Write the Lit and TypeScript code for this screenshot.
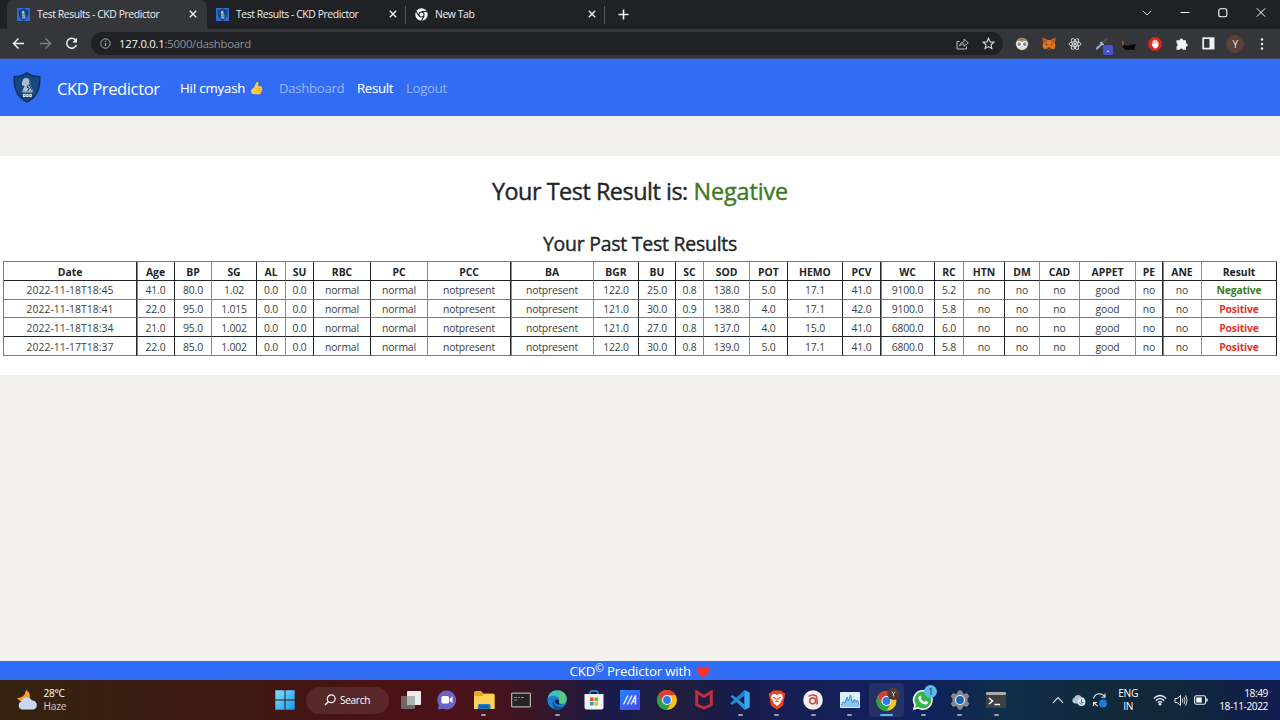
import { LitElement, html, css, svg } from "lit";
import { customElement } from "lit/decorators.js";
import { classMap } from "lit/directives/class-map.js";

const HEAD = "Date,Age,BP,SG,AL,SU,RBC,PC,PCC,BA,BGR,BU,SC,SOD,POT,HEMO,PCV,WC,RC,HTN,DM,CAD,APPET,PE,ANE,Result".split(",");
const ROWS = [
  "2022-11-18T18:45,41.0,80.0,1.02,0.0,0.0,normal,normal,notpresent,notpresent,122.0,25.0,0.8,138.0,5.0,17.1,41.0,9100.0,5.2,no,no,no,good,no,no,Negative",
  "2022-11-18T18:41,22.0,95.0,1.015,0.0,0.0,normal,normal,notpresent,notpresent,121.0,30.0,0.9,138.0,4.0,17.1,42.0,9100.0,5.8,no,no,no,good,no,no,Positive",
  "2022-11-18T18:34,21.0,95.0,1.002,0.0,0.0,normal,normal,notpresent,notpresent,121.0,27.0,0.8,137.0,4.0,15.0,41.0,6800.0,6.0,no,no,no,good,no,no,Positive",
  "2022-11-17T18:37,22.0,85.0,1.002,0.0,0.0,normal,normal,notpresent,notpresent,122.0,30.0,0.8,139.0,5.0,17.1,41.0,6800.0,5.8,no,no,no,good,no,no,Positive",
].map((r) => r.split(","));
const THICK = new Set([0, 8, 16, 23]);
const DARK = new Set([0, 1, 3, 5, 6, 8, 10, 11, 14, 15, 16, 17, 19, 23, 25]);

const shield = svg`
  <path d="M14 .8C18 3.8 22 4.6 26.800 4.600C27.400 15 24.800 25 14 30C3.200 25 .6 15 1.200 4.600C6 4.600 10 3.800 14 .8Z" fill="#17477f" stroke="#0c2b57" stroke-width="1.300"/>
  <path d="M9.500 9C10 5.300 15.500 4.800 16.500 8.500L16.300 11.500L17.500 13.500L20.500 19.300H9.200L11.500 14L9.300 13.500Q8 11 9.500 9Z" fill="#a9bfd4"/>
  <path d="M15.800 12.500L13.800 15L16.300 16.200L14.800 19M16.300 13L19.300 18.500" stroke="#0d3263" stroke-width="1" fill="none"/>
  <path d="M9.500 20H19.500" stroke="#e3edf7" stroke-width=".8"/>
  <path d="M10 22H18.800V25H10Z" fill="#e6eef7"/><path d="M12.900 22V25M15.900 22V25M10.800 23.500H12M13.800 23.500H15M16.800 23.500H18" stroke="#17477f" stroke-width=".6"/>`;
const favicon = html`<svg class="fav" width="13" height="13" viewBox="0 0 28 28"><rect width="28" height="28" fill="#3468d8"/><g transform="translate(3.500 1) scale(.76 .86)">${shield}</g></svg>`;
const closeX = html`<svg width="8" height="8" viewBox="0 0 8 8"><path d="M.8.8L7.200 7.200M7.200.8L.8 7.200" stroke="#f1f1f1" stroke-width="1.400"/></svg>`;
const chromeMono = html`<svg class="fav" width="13" height="13" viewBox="0 0 24 24"><circle cx="12" cy="12" r="11.500" fill="#f1f3f4"/><circle cx="12" cy="12" r="5.600" fill="#202124"/><circle cx="12" cy="12" r="3.700" fill="#f1f3f4"/><path d="M12 6.400H22.500M7.200 14.900L2 6M16.800 14.900L11.600 24" stroke="#202124" stroke-width="1.900"/></svg>`;
const chromeShape = svg`
  <circle cx="10" cy="10" r="10" fill="#fbc116"/>
  <path d="M1.340 5A10 10 0 0 0 10 20L14.330 12.500L10 10L5.670 12.500Z" fill="#2ba24c"/>
  <path d="M1.340 5L5.670 12.500L10 10V5H18.660A10 10 0 0 0 1.340 5Z" fill="#e33b2e"/>
  <circle cx="10" cy="10" r="5" fill="#fff"/><circle cx="10" cy="10" r="3.900" fill="#2f79e8"/>`;

const I = (w: number, h: number, body: unknown) => html`<svg width=${w} height=${h} viewBox="0 0 ${w} ${h}" fill="none">${body}</svg>`;

const EXT = [
  I(14, 14, svg`<circle cx="7" cy="7" r="6.200" fill="#b5a58a"/><path d="M2 10Q7 16 12 10Z" fill="#e6dccb"/><path d="M2.500 3.500Q7 -1 11.500 3.500Z" fill="#8b7958"/><circle cx="4.200" cy="7.200" r="2.400" fill="#7d8d96" stroke="#fff" stroke-width="1.100"/><circle cx="9.800" cy="7.200" r="2.400" fill="#7d8d96" stroke="#fff" stroke-width="1.100"/>`),
  I(14, 13, svg`<path d="M.5.5L5.500 3H8.500L13.500.5L12.800 6L13.500 9L12 12.300L9 11.500L8 12.600H6L5 11.500L2 12.300L.5 9L1.200 6Z" fill="#e2761b"/><path d="M.5.5L5.500 4L4 6L1 6ZM13.500.5L8.500 4L10 6L13 6Z" fill="#b8582a"/><path d="M3 7.500L5.500 7L5 8.600ZM11 7.500L8.500 7L9 8.600Z" fill="#233447"/><path d="M5.500 10.500H8.500L8 12H6Z" fill="#3a2a28"/>`),
  I(14, 14, svg`<g stroke="#e4e6e8" stroke-width=".9"><ellipse cx="7" cy="7" rx="6" ry="2.300"/><ellipse cx="7" cy="7" rx="6" ry="2.300" transform="rotate(60 7 7)"/><ellipse cx="7" cy="7" rx="6" ry="2.300" transform="rotate(120 7 7)"/></g><circle cx="7" cy="7" r="1.200" fill="#e4e6e8"/>`),
  html`<span class="picker">${I(14, 14, svg`<path d="M2 11.500L7 6.500" stroke="#8fb0e6" stroke-width="2.200" stroke-linecap="round"/><path d="M7.500 6L11.500 2" stroke="#4a4d55" stroke-width="2.600" stroke-linecap="round"/><path d="M5.500 5L8.500 8" stroke="#d5dbe5" stroke-width="1.200"/>`)}<b class="dot">.</b></span>`,
  I(16, 14, svg`<path d="M1.500 4.500L3.500 8L6.500 9L12 7.500L15.200 7.500L14 9.500L13.500 12.800H4L1.500 9.500Z" fill="#050505"/><path d="M1.200 3.500L2.600 5V9L1.500 8.500Z" fill="#b47a3b"/>`),
  I(14, 14, svg`<path d="M4.200.3H9.800L13.700 4.200V9.800L9.800 13.700H4.200L.3 9.800V4.200Z" fill="#d8281d"/><path d="M5.200 4V8M6.700 3V8M8.200 3.300V8M9.700 4.700V8.500" stroke="#fff" stroke-width="1.100" stroke-linecap="round"/><path d="M4.600 6.600H10.300V8.800Q9.500 11.500 7.300 11.500Q5.500 11.500 3.700 7.600Z" fill="#fff"/>`),
  I(14, 14, svg`<path d="M1.500 3.300H4.700A1.700 1.700 0 1 1 8.100 3.300H11V6.200A1.700 1.700 0 1 1 11 9.600V12.700H8A1.700 1.700 0 0 0 4.800 12.700H1.500V9.500A1.700 1.700 0 0 0 1.500 6.300Z" fill="#f1f3f4"/>`),
  I(13, 13, svg`<rect x="1.200" y="1.200" width="10.400" height="10.400" stroke="#f1f3f4" stroke-width="1.700"/><rect x="7.500" y="1" width="4.500" height="11" fill="#f1f3f4"/>`),
];

const TASKS: { icon: unknown; state?: string }[] = [
  { icon: I(22, 20, svg`<rect x="7" y="1" width="14" height="14" rx="1" fill="#ececec"/><rect x="1" y="6" width="14" height="13" rx="1" fill="#777" fill-opacity=".85"/><rect x="7" y="6" width="8" height="9" fill="#b2b2b2"/>`) },
  { icon: I(20, 20, svg`<path d="M10 .5A9.500 9.500 0 1 1 6 18.800L.8 19.500L1.800 15A9.500 9.500 0 0 1 10 .5Z" fill="#6d62c5"/><rect x="4.500" y="6" width="7.500" height="7.500" rx="1.500" fill="#fff"/><path d="M12.600 8.800L15.500 6.600V13L12.600 11Z" fill="#fff"/>`) },
  { icon: I(22, 20, svg`<path d="M1 2.500Q1 1 2.500 1H8L10.500 3.500H20Q21.500 3.500 21.500 5V18.500H1Z" fill="#e7a52b"/><path d="M1 6H9L11 4.300H21.500V19H1Z" fill="#ffd257"/><path d="M5 19V15.500Q5 14 6.500 14H16Q17.500 14 17.500 15.500V19Z" fill="#1778c6"/><path d="M7.500 16.800H15" stroke="#0a4f91" stroke-width="1.200"/>`), state: "run" },
  { icon: I(20, 16, svg`<rect x=".6" y="1.100" width="18.800" height="13.800" rx="1" fill="#242424" stroke="#aaa" stroke-width="1.300"/><path d="M3 5.500H6M7 5.500H9M10 5.500H13M3 8H6" stroke="#888" stroke-width="1"/>`) },
  { icon: I(20, 20, svg`<circle cx="10" cy="10" r="9.700" fill="#1b7fd0"/><path d="M.5 8.500C1.500 3.500 5.500 .3 10 .3C16 .3 19.700 4.500 19.700 8.800C19.700 12.300 17 14 14.200 14C11.800 14 11.300 12.900 12.200 11.500C13 8 9.500 5.800 6.500 5.800C3.800 5.800 1.800 6.800 .5 8.500Z" fill="#3fc1b0"/><path d="M12 .5C17 1.500 19.700 5 19.700 8.800C19.700 12.300 17 14 14.200 14C11.800 14 11.300 12.900 12.200 11.500C13.500 8 12 3 12 .5Z" fill="#62cc6a" fill-opacity=".75"/><path d="M7.300 10.500C6 15 10.500 18.400 17.500 16.200C15.500 19 12 20 9 19.600C5.500 18.500 4.500 12 7.300 10.500Z" fill="#0f4f9e"/><path d="M8.200 10A3 3 0 0 1 12.200 11.500C11.300 12.900 11.800 14 14.200 14C11 15.500 7.500 13.500 8.200 10Z" fill="#0b2240"/>`), state: "run" },
  { icon: I(20, 20, svg`<path d="M6 5V2.500Q6 1 7.500 1H12.500Q14 1 14 2.500V5" stroke="#2fa4e0" stroke-width="1.300"/><path d="M.5 4H19.500V17.500Q19.500 19.500 17.500 19.500H2.500Q.5 19.500.5 17.500Z" fill="#f3f4f6"/><path d="M6 7.500H9.600V11.100H6Z" fill="#e9542c"/><path d="M10.400 7.500H14V11.100H10.400Z" fill="#7fb52e"/><path d="M6 11.900H9.600V15.500H6Z" fill="#2a9ddd"/><path d="M10.400 11.900H14V15.500H10.400Z" fill="#f5b62a"/>`) },
  { icon: I(20, 20, svg`<defs><linearGradient id="m" x2="1" y2="1"><stop stop-color="#2087ff"/><stop offset="1" stop-color="#4d43ea"/></linearGradient></defs><rect width="20" height="20" fill="url(#m)"/><path d="M3.500 14.500L8 5.500M7.500 14.500L12 5.500M11 14.500L15.500 5.500V14.500M12.500 11.500H15.500" stroke="#dcebff" stroke-width="1.500"/>`) },
  { icon: I(20, 20, chromeShape) },
  { icon: I(20, 20, svg`<path d="M2.700 2L10 6.500L17.300 2V14.800L10 18L2.700 14.800Z" stroke="#bf2d3e" stroke-width="3"/>`) },
  { icon: I(20, 20, svg`<path d="M14.500.3L19.500 2.500V17.500L14.500 19.700V5.500L2.500 15L.5 13.800V12.700Z" fill="#1a86d0"/><path d="M.5 6.200L2.500 5L14.500 14.500V19.700Z" fill="#2497e0"/><path d="M14.500.3L19.500 2.500V17.500L14.500 19.700Z" fill="#38a9ef"/>`), state: "run" },
  { icon: I(18, 20, svg`<path d="M5 .5H13L15 2.500L17.300 3.500L16.800 6L15 15.500L9 19.800L3 15.500L1.200 6L.7 3.500L3 2.500Z" fill="#f0451d"/><path d="M4 4.500L6.500 4L9 5L11.500 4L14 4.500L15 8L13 11L12 13.500L9 16L6 13.500L5 11L3 8Z" fill="#fff"/><path d="M5 7.300L7.500 8L7 9.500M13 7.300L10.500 8L11 9.500M7 12L9 11L11 12M9 8V11.500" stroke="#f0451d" stroke-width="1"/>`), state: "run" },
  { icon: I(20, 20, svg`<circle cx="10" cy="10" r="9.800" fill="#f0eeee"/><circle cx="9.700" cy="10.700" r="3" stroke="#d1433e" stroke-width="1.500"/><path d="M5.500 6.300Q9.500 3.800 13 5.800Q14.500 7.500 14 14.500" stroke="#d1433e" stroke-width="1.500"/>`), state: "run" },
  { icon: I(20, 16, svg`<rect width="20" height="16" rx=".8" fill="#d9edfa"/><path d="M1 13L3 10L5 11L7 5L8.500 9L10.500 3L12.500 11L14.500 7L16 10L17.500 8L19 13V15H1Z" fill="#8cc6ee"/><path d="M1 13L3 10L5 11L7 5L8.500 9L10.500 3L12.500 11L14.500 7L16 10L17.500 8L19 13" stroke="#3186c4" stroke-width=".9"/>`), state: "run" },
  { icon: I(26, 24, svg`<g transform="translate(2.500 3)">${chromeShape}</g><circle cx="19.500" cy="5.800" r="6.200" fill="#503b36"/><path d="M17.800 3.500L19.500 6L21.200 3.500M19.500 6V8.500" stroke="#d5c5bd" stroke-width="1"/>`), state: "active" },
  { icon: html`<span class="wa">${I(22, 22, svg`<path d="M11 1A10 10 0 1 1 6 19.800L.8 21L2.200 16A10 10 0 0 1 11 1Z" fill="#fff"/><path d="M11 2.600A8.400 8.400 0 1 1 6.300 18L3 18.900L4 15.800A8.400 8.400 0 0 1 11 2.600Z" fill="#35b54a"/><path d="M7 7.500Q8.500 5.500 9.300 8L9 9.800Q10.300 12 12.500 13L13.800 11.800L16 13Q16 15.500 13.500 15.500Q7.500 14.500 6.500 9.500Z" fill="#fff"/>`)}<b class="count">1</b></span>`, state: "run" },
  { icon: I(20, 20, svg`<path d="M8 .5H12L12.600 3L14.500 4L17 3L19.300 6.500L17.500 8.500V11.500L19.300 13.500L17 17L14.500 16L12.600 17L12 19.500H8L7.400 17L5.500 16L3 17L.7 13.500L2.500 11.500V8.500L.7 6.500L3 3L5.500 4L7.400 3Z" fill="#85898e"/><circle cx="10" cy="10" r="5" fill="#e9eef3"/><circle cx="10" cy="10" r="3.900" fill="#1463b0"/>`), state: "run" },
  { icon: I(20, 16, svg`<rect width="20" height="16" rx="1" fill="#3e3f41"/><rect width="20" height="3" rx="1" fill="#a9abad"/><path d="M3 6L6.500 9L3 12M8.500 12.500H14" stroke="#fff" stroke-width="1.500"/>`), state: "run" },
];

@customElement("app-root")
export class AppRoot extends LitElement {
  static styles = css`
    :host { display: flex; flex-direction: column; width: 1280px; height: 720px; overflow: hidden; background: #f3f1ed; color: #212529; font-family: "Open Sans", "Noto Sans", sans-serif; }
    * { box-sizing: border-box; }
    svg { display: block; flex: none; }
    .tabs { display: flex; height: 29px; background: #202124; align-items: stretch; padding-left: 7px; color: #eceef0; font-size: 10.400px; letter-spacing: -.42px; white-space: nowrap; }
    .tab { display: flex; align-items: center; width: 199px; padding: 0 9px 1px 10px; border-right: 1px solid transparent; }
    .tab .fav { margin-right: 7px; }
    .tab .title { flex: 1; }
    .tab.on { width: 200px; background: #35363a; border-radius: 7px 7px 0 0; }
    .tab.sep { padding-left: 9px; padding-right: 8px; border-image: linear-gradient(transparent 7px, #55585c 7px, #55585c 23px, transparent 23px) 1; }
    .plus { margin: 9px 0 0 13px; }
    .win { display: flex; align-items: center; margin-left: auto; height: 26px; padding-right: 14px; gap: 28px; }
    .bar { display: flex; height: 30px; background: #35363a; align-items: center; padding-left: 12px; border-bottom: 1px solid #3d4660; }
    .navs { display: flex; gap: 13.700px; width: 79px; }
    .omni { display: flex; align-items: center; width: 912px; height: 23px; border-radius: 12px; background: #202124; padding: 0 8px 0 9px; font-size: 11.300px; letter-spacing: -.24px; color: #8f9398; }
    .omni .url { margin-left: 8px; flex: 1; }
    .omni .host { color: #f3f4f5; }
    .omni .acts { display: flex; gap: 13px; }
    .exts { display: flex; margin-left: 5.500px; }
    .ext { display: flex; width: 26.700px; height: 26px; align-items: center; justify-content: center; }
    .picker { position: relative; }
    .dot { position: absolute; left: 8px; top: 8px; width: 10px; height: 10px; background: #4454c6; color: #fff; border-radius: 1px; font-size: 8px; line-height: 7px; text-align: center; }
    .avatar { width: 18px; height: 18px; border-radius: 50%; background: #5d4037; color: #f0e8e4; font-size: 10px; line-height: 18px; text-align: center; }
    nav { display: flex; height: 57px; background: #316cf4; align-items: center; padding: 0 0 0 13px; color: #fff; white-space: nowrap; }
    .brand { font-size: 16.600px; letter-spacing: -.42px; margin: 2px 0 0 16px; width: 123px; }
    .links { display: flex; font-size: 13.200px; letter-spacing: -.3px; padding-top: 1px; }
    .hi { display: flex; align-items: center; width: 99px; gap: 5px; letter-spacing: -.16px; }
    .dash { width: 78px; }
    .res { width: 49px; letter-spacing: -.3px; }
    .hi, .res { -webkit-text-stroke: .1px currentColor; }
    .dim { color: #98b5f9; }
    .panel { margin-top: 40px; height: 219px; background: #fff; padding: 20px 3px 0; }
    h1, h2 { font-weight: 400; -webkit-text-stroke: .4px currentColor; }
    h1 { margin: 0; height: 54px; font-size: 23.400px; line-height: 30px; letter-spacing: -.47px; text-align: center; }
    h1 .neg { letter-spacing: -.1px; }
    h2 { margin: 0; height: 31px; font-size: 19.400px; line-height: 27px; letter-spacing: -.21px; text-align: center; }
    .neg { color: #3d7a24; }
    .pos { color: #e3342a; }
    .grid { display: grid; width: 1274px; border-left: 1px solid #777b7e; border-top: 1px solid #777b7e; grid-template-rows: 19px 19px 18px 19px 19px;
      grid-template-columns: 133px 38px 37px 45px 29px 28px 57px 57px 83px 83px 45px 37px 28px 46px 38px 55px 38px 54px 29px 41px 35px 40px 56px 27px 39px 75px; }
    .cell { display: flex; align-items: center; justify-content: center; border-right: 1px solid #8a8d90; border-bottom: 1px solid #777b7e; font-size: 10.400px; letter-spacing: -.17px; line-height: 14px; white-space: nowrap; color: #3a3e42; }
    .cell.d { border-right-color: #212529; }
    .cell.t { box-shadow: 1px 0 0 #8a8d90; }
    .cell.u { border-bottom-color: #212529; }
    .cell.b { font-weight: 700; color: #212529; }
    .cell.date { letter-spacing: .03px; }
    .cell.low { padding-top: 1px; }
    .cell.head { padding-top: 1px; letter-spacing: -.02px; }
    .cell.neg { color: #3d7a24; }
    .cell.pos { color: #e3342a; }
    footer { display: flex; justify-content: center; align-items: center; height: 19px; padding-top: 2px; margin-top: auto; background: #316cf4; color: #fff; font-size: 13.200px; letter-spacing: -.16px; line-height: 17px; white-space: pre; }
    sup { font-size: 10.500px; line-height: 0; vertical-align: 4px; }
    .heart { margin-left: 5.500px; }
    .task { display: flex; height: 40px; align-items: center; color: #fff; font-size: 10.200px; letter-spacing: -.35px; white-space: nowrap; background: linear-gradient(90deg, #34230f 0, #3a1e12 120px, #401612 270px, #4b1214 380px, #4a121a 470px, #3a1423 530px, #1a1b4b 610px, #201d3d 680px, #171c4c 740px, #14205a 850px, #10215a 930px, #102d49 1000px, #10293a 1120px, #10263c 1190px, #111c50 1280px); }
    .weather { display: flex; align-items: center; width: 274.500px; padding-left: 16px; gap: 5.500px; line-height: 13px; }
    .haze { color: #d2c7c2; letter-spacing: -.2px; }
    .search { display: flex; align-items: center; justify-content: center; gap: 4px; width: 83px; height: 27px; margin: 0 4px 0 11px; border-radius: 14px; background: rgba(255,255,255,.09); }
    .apps { display: flex; }
    .app { position: relative; display: flex; width: 36.600px; height: 40px; align-items: center; justify-content: center; }
    .app.run::after, .app.active::after { content: ""; position: absolute; left: 15.800px; bottom: 4px; width: 5px; height: 2px; border-radius: 1px; background: #9a9ca8; }
    .app.active::before { content: ""; position: absolute; inset: 3px 1px; border-radius: 3px; background: rgba(255,255,255,.08); }
    .app.active::after { left: 12px; width: 13px; background: #55b8ee; }
    .app svg { position: relative; }
    .wa { position: relative; }
    .count { position: absolute; right: -3px; top: -4px; width: 13px; height: 13px; border-radius: 50%; background: #55b9f0; color: #123; font-size: 9px; font-weight: 400; line-height: 13px; text-align: center; }
    .tray { display: flex; align-items: center; margin-left: auto; padding-right: 12px; line-height: 13px; text-align: center; }
    .sys { display: flex; gap: 6.500px; align-items: center; }
    .lang { margin: 0 15px 0 11px; }
    .clock { width: 60px; text-align: right; letter-spacing: -.44px; }
  `;

  cell(v: string, c: number, r: number) {
    const cls = {
      cell: true, d: DARK.has(c), t: THICK.has(c), u: r === 0 || r === 3, b: r === 0 || c === 25,
      head: r === 0, date: c === 0 && r > 0, low: r >= 3, neg: v === "Negative", pos: v === "Positive",
    };
    return html`<div class=${classMap(cls)}>${v}</div>`;
  }

  render() {
    return html`
      <div class="tabs">
        <div class="tab on">${favicon}<span class="title">Test Results - CKD Predictor</span>${closeX}</div>
        <div class="tab sep">${favicon}<span class="title">Test Results - CKD Predictor</span>${closeX}</div>
        <div class="tab sep">${chromeMono}<span class="title">New Tab</span>${closeX}</div>
        <svg class="plus" width="11" height="11" viewBox="0 0 11 11"><path d="M5.500.5V10.500M.5 5.500H10.500" stroke="#f1f1f1" stroke-width="1.600"/></svg>
        <div class="win">
          ${I(10, 6, svg`<path d="M.8.800L5 5L9.200.800" stroke="#d5d6d8" stroke-width="1"/>`)}
          ${I(10, 10, svg`<path d="M.5 4.500H9.500" stroke="#fff" stroke-width="1"/>`)}
          ${I(10, 10, svg`<rect x=".8" y=".8" width="8" height="8" rx="1.800" stroke="#fff" stroke-width="1.100"/>`)}
          ${I(10, 10, svg`<path d="M.8.300L9.200 8.700M9.200.300L.8 8.700" stroke="#fff" stroke-width="1"/>`)}
        </div>
      </div>
      <div class="bar">
        <div class="navs">
          ${I(13, 13, svg`<path d="M12 6.500H1.500M6.500 1.500L1.500 6.500L6.500 11.500" stroke="#f1f3f4" stroke-width="1.400"/>`)}
          ${I(13, 13, svg`<path d="M1 6.500H11.500M6.500 1.500L11.500 6.500L6.500 11.500" stroke="#7d8084" stroke-width="1.400"/>`)}
          ${I(13, 13, svg`<path d="M10.800 3.300A5 5 0 1 0 11.400 8" stroke="#f1f3f4" stroke-width="1.500"/><path d="M12 .8V5.500H7.300Z" fill="#f1f3f4"/>`)}
        </div>
        <div class="omni">
          ${I(11, 11, svg`<circle cx="5.500" cy="5.500" r="4.700" stroke="#a5a8ac"/><path d="M5.500 5V8M5.500 2.800V4" stroke="#a5a8ac" stroke-width="1.200"/>`)}
          <span class="url"><span class="host">127.0.0.1</span>:5000/dashboard</span>
          <span class="acts">
            ${I(13, 13, svg`<path d="M3.500 4.500H1V12H10.500V9.500" stroke="#b9bcc0"/><path d="M3.500 9Q4 5 8 4.700V2L12.300 5.800L8 9.300V6.800Q5.500 6.800 3.500 9Z" stroke="#b9bcc0" stroke-width=".9"/>`)}
            ${I(13, 13, svg`<path d="M6.500 1.200L8.100 4.900L12 5.200L9 7.800L9.900 11.700L6.500 9.600L3.100 11.700L4 7.800L1 5.200L4.900 4.900Z" stroke="#d7d9dc" stroke-width="1.100"/>`)}
          </span>
        </div>
        <div class="exts">
          ${EXT.map((e) => html`<div class="ext">${e}</div>`)}
          <div class="ext"><div class="avatar">Y</div></div>
          <div class="ext">${I(4, 14, svg`<g fill="#f1f3f4"><circle cx="2" cy="2.500" r="1.200"/><circle cx="2" cy="7" r="1.200"/><circle cx="2" cy="11.500" r="1.200"/></g>`)}</div>
        </div>
      </div>
      <nav>
        <svg width="28" height="31" viewBox="0 0 28 31">${shield}</svg>
        <span class="brand">CKD Predictor</span>
        <div class="links">
          <span class="hi"><span>Hi! cmyash</span>
            ${I(13, 14, svg`<path d="M4 6.500L6.300 1.500Q7 .3 8 1.200Q8.800 2 8 5.300H10.800Q12.300 5.500 12 7Q12.700 8 12 9Q12.300 10.300 11.300 11Q11.300 13 9.500 13.200H4.500Q1 13.200 1 10Q1 8 4 6.500Z" fill="#ffc83d"/><path d="M8.200 7.600H11.800M8.500 9.500H11.500M8.500 11.300H11" stroke="#e19b24" stroke-width=".7"/>`)}
          </span>
          <span class="dash dim">Dashboard</span><span class="res">Result</span><span class="dim">Logout</span>
        </div>
      </nav>
      <section class="panel">
        <h1>Your Test Result is: <span class="neg">Negative</span></h1>
        <h2>Your Past Test Results</h2>
        <div class="grid">${[HEAD, ...ROWS].map((row, r) => row.map((v, c) => this.cell(v, c, r)))}</div>
      </section>
      <footer><span>CKD<sup>©</sup> Predictor with</span><svg class="heart" width="14" height="12" viewBox="0 0 14 12"><path d="M7 11.600Q.5 7.500.5 3.800Q.8.500 3.800.500Q6 .6 7 2.500Q8 .6 10.200.500Q13.200.500 13.500 3.800Q13.500 7.500 7 11.600Z" fill="#f8312f"/></svg></footer>
      <div class="task">
        <div class="weather">
          ${I(22, 22, svg`<path d="M10 1Q16 4 13 12H4L1 9Q9 9 10 1Z" fill="#f0a332"/><path d="M5.500 20.500A4.500 4.500 0 0 1 5.300 12.200A6 6 0 0 1 16 11.500A4.600 4.600 0 0 1 17.500 20.500Z" fill="#cbd6f6"/>`)}
          <div><div>28°C</div><div class="haze">Haze</div></div>
        </div>
        <svg width="20" height="20" viewBox="0 0 20 20"><defs><linearGradient id="w" x2="1" y2="1"><stop stop-color="#7fe0fb"/><stop offset="1" stop-color="#1598ef"/></linearGradient></defs><path d="M.3.300H9.500V9.500H.3ZM10.500.3H19.700V9.500H10.500ZM.3 10.500H9.500V19.700H.3ZM10.500 10.500H19.700V19.700H10.500Z" fill="url(#w)"/></svg>
        <div class="search">${I(12, 12, svg`<circle cx="7.200" cy="4.800" r="3.900" stroke="#fff" stroke-width="1.200"/><path d="M4.300 7.700L1 11" stroke="#fff" stroke-width="1.400"/>`)}<span>Search</span></div>
        <div class="apps">${TASKS.map((t) => html`<div class="app ${t.state ?? ""}">${t.icon}</div>`)}</div>
        <div class="tray">
          <div class="sys">
            ${I(12, 8, svg`<path d="M1 6.800L6 1.500L11 6.800" stroke="#e8ebee" stroke-width="1.100"/>`)}
            ${I(15, 14, svg`<path d="M3.500 10.500A3 3 0 0 1 3.300 4.800A4 4 0 0 1 10.500 4A3.400 3.400 0 0 1 11.500 10.500Z" fill="#b9c3cc"/><circle cx="10.500" cy="9" r="3.900" fill="#dfe8ee"/><path d="M10.500 6.500V9.500H12.500M8.300 9.500Q9 11.500 11.500 11" stroke="#2b78ae" stroke-width="1"/>`)}
            ${I(15, 16, svg`<path d="M1.500 6.500Q3 1.800 7.500 1.800Q11 2 12.800 5M13 1.500V5.200H9.300M2 10Q3 13 6 14M1.500 14V10.500H5" stroke="#dfe5ea" stroke-width="1.100"/><circle cx="11" cy="11.500" r="3.900" fill="#1681dd"/>`)}
          </div>
          <div class="lang">ENG<br />IN</div>
          <div class="sys">
            ${I(14, 12, svg`<g stroke="#e9eef2" stroke-width="1.200"><path d="M.8 4.500Q7-1.500 13.200 4.500M2.800 6.700Q7 2.700 11.200 6.700M4.800 8.700Q7 6.700 9.200 8.700"/></g><circle cx="7" cy="10.300" r="1.300" fill="#e9eef2"/>`)}
            ${I(14, 13, svg`<path d="M1 4.500H3.200L6.500 1.500V11.500L3.200 8.500H1Z" stroke="#e9eef2" stroke-width="1"/><path d="M8.300 4.500Q9.500 6.500 8.300 8.500M10 2.900Q12 6.500 10 10.100M11.700 1.300Q14.500 6.500 11.700 11.700" stroke="#e9eef2" stroke-width=".9"/>`)}
            ${I(14, 10, svg`<rect x=".6" y=".8" width="11" height="8.400" rx="1.800" stroke="#e9eef2" stroke-width="1.100"/><rect x="2.200" y="2.400" width="5.500" height="5.200" fill="#fff"/><path d="M13 3.500V6.500" stroke="#e9eef2" stroke-width="1.400"/>`)}
          </div>
          <div class="clock">18:49<br />18-11-2022</div>
        </div>
      </div>
    `;
  }
}
